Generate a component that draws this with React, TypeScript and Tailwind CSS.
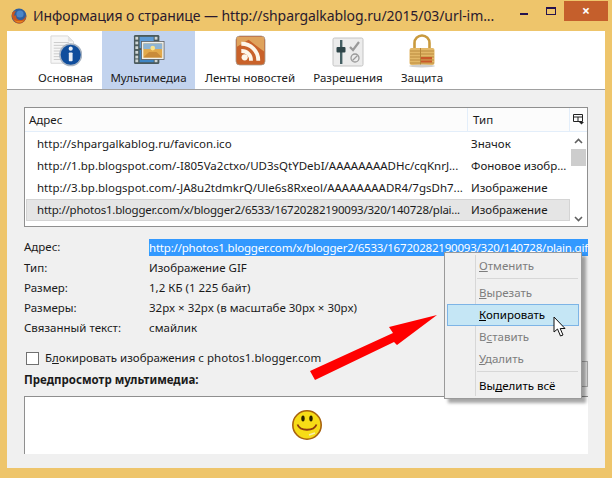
const fontStack = "font-['Noto_Sans','Open_Sans',sans-serif]";

function FirefoxIcon() {
  return (
    <svg width="16" height="16" viewBox="0 0 16 16">
      <circle cx="8" cy="8" r="7.5" fill="#2f5f9e" />
      <circle cx="9" cy="6" r="3.6" fill="#4a86c8" />
      <path d="M1 5 C0 11 4 16 9 15.5 C13 15 15.8 11 15 7 C14.5 10 12 12.5 8.5 12 C5.5 11.5 4.5 9 5.5 7 L3.5 8 C3 7 3.5 4.5 5 3 C3 3 1.8 3.8 1 5 Z" fill="#c9581c" />
      <path d="M3 12 C5 15 10 15.5 13 12.5 C10 13.5 6 13.5 3 12 Z" fill="#e88a1f" />
    </svg>
  );
}

function InfoIcon() {
  return (
    <svg className="mb-px" width="32" height="32" viewBox="0 0 34 34">
      <path d="M1 1 H19 L25 7 V30 H1 Z" fill="#f6f6f6" stroke="#d5d5d5" />
      <path d="M19 1 V7 H25 Z" fill="#e2e2e2" />
      {[8, 11, 14, 17, 20, 23, 26].map((y) => (
        <path key={y} d={`M4 ${y} H20`} stroke="#c9c9c9" strokeWidth="1" />
      ))}
      <circle cx="22" cy="21" r="11.5" fill="#0f4d9c" stroke="#a9b4c2" strokeWidth="1.6" />
      <circle cx="22" cy="14.5" r="2.2" fill="#e9eef5" />
      <rect x="20" y="18.5" width="4" height="9.5" rx="0.8" fill="#e9eef5" />
    </svg>
  );
}

function MediaIcon() {
  return (
    <svg className="mb-[2px]" width="32" height="32" viewBox="0 0 34 34">
      <rect x="1" y="1" width="27" height="31" rx="1.5" fill="#4a5a5c" />
      {[3, 8, 13, 18, 23, 27].map((y) => (
        <g key={y}>
          <rect x="2.5" y={y} width="3" height="3" fill="#cfd6d6" />
          <rect x="23" y={y} width="3" height="3" fill="#cfd6d6" />
        </g>
      ))}
      <rect x="7" y="3" width="15" height="12" fill="#5c9ad6" />
      <rect x="7" y="17" width="15" height="13" fill="#3f86c4" />
      <rect x="9" y="8" width="24" height="19" fill="#f0f0ec" stroke="#5a5a5a" strokeWidth="0.8" />
      <rect x="11" y="10" width="20" height="15" fill="#e2a94b" />
      <rect x="11" y="10" width="20" height="6" fill="#8eb4d4" />
      <circle cx="21" cy="15" r="2.5" fill="#fbe48c" />
      <path d="M11 25 L17 19 H25 L31 25 Z" fill="#c98b3a" />
    </svg>
  );
}

function RssIcon() {
  return (
    <svg className="mb-[2px]" width="31" height="31" viewBox="0 0 32 32">
      <rect x="1" y="1" width="30" height="30" rx="4" fill="#c9622a" stroke="#a8a39a" strokeWidth="0.8" />
      <path d="M2 2 H30 V17 L14 5 L2 12 Z" fill="#dfa35c" />
      <circle cx="10" cy="23" r="3.2" fill="#fdf6ea" />
      <path d="M6.5 14.5 A11.5 11.5 0 0 1 18.5 26.5 H14.5 A7.5 7.5 0 0 0 6.5 18.5 Z" fill="#fdf6ea" />
      <path d="M6.5 7 A19 19 0 0 1 26 26.5 H22 A15 15 0 0 0 6.5 11 Z" fill="#fdf6ea" />
    </svg>
  );
}

function PermissionsIcon() {
  return (
    <svg className="mb-px" width="32" height="30" viewBox="0 0 32 30">
      <rect x="1" y="1" width="30" height="28" rx="1.5" fill="#ececec" stroke="#c4c4c4" />
      <rect x="8" y="3" width="2.4" height="24" fill="#456064" />
      <rect x="4.5" y="10" width="9" height="5.5" rx="1" fill="#2e4549" />
      <path d="M18 10 L21 13 L27 5" fill="none" stroke="#9a9a9a" strokeWidth="2.2" />
      <circle cx="23" cy="21" r="4" fill="none" stroke="#9a9a9a" strokeWidth="1.3" />
      <path d="M20.5 23.5 L25.5 18.5" stroke="#9a9a9a" strokeWidth="1.3" />
    </svg>
  );
}

function LockIcon() {
  return (
    <svg width="28" height="34" viewBox="0 0 28 34">
      <path d="M6.5 15 V9 A7.5 7.5 0 0 1 21.5 9 V15" fill="none" stroke="#c99a3e" strokeWidth="2.6" />
      <rect x="1.5" y="14" width="25" height="17" rx="2" fill="#e3b868" />
      {[17, 20, 23, 26, 29].map((y) => (
        <path key={y} d={`M2 ${y} H26`} stroke="#b5863a" strokeWidth="0.9" />
      ))}
      <rect x="12" y="14" width="1" height="17" fill="#b5863a" />
      <rect x="13" y="23" width="11" height="2.4" fill="#c9582a" />
      <rect x="13" y="26.5" width="11" height="2" fill="#c9582a" />
      <ellipse cx="14" cy="32" rx="13" ry="1.4" fill="#cfcfcf" />
    </svg>
  );
}

function Smiley() {
  return (
    <svg width="30" height="30" viewBox="0 0 30 30">
      <circle cx="15" cy="15" r="14.2" fill="#f7dc16" stroke="#a8620f" strokeWidth="1.6" />
      <ellipse cx="11" cy="8.5" rx="1.7" ry="3" fill="#2b2100" />
      <ellipse cx="19" cy="8.5" rx="1.7" ry="3" fill="#2b2100" />
      <path d="M5.5 14.5 C8 21.5 22 21.5 24.5 14.5" fill="none" stroke="#8f3a10" strokeWidth="1.8" />
      <path d="M17 25 L23 23" stroke="#f6efb0" strokeWidth="1.4" />
    </svg>
  );
}

function RedArrow() {
  return (
    <svg className="absolute left-[305px] top-[310px]" width="136" height="74" viewBox="305 310 136 74">
      <polygon points="310,371 393,333 389,327 437,315 397,345 394,342 315,380" fill="#ff0000" />
    </svg>
  );
}

function Cursor() {
  return (
    <svg className="absolute left-[553px] top-[316px]" width="14" height="22" viewBox="0 0 14 22">
      <path d="M1 1 V16 L4.5 13 L7.5 20 L10 19 L7.2 12.5 H12 Z" fill="#fff" stroke="#111" strokeWidth="1" strokeLinejoin="round" />
    </svg>
  );
}

const tabs = [
  { label: "Основная", width: "w-[73px]", icon: <InfoIcon /> },
  { label: "Мультимедиа", width: "w-[93px]", icon: <MediaIcon />, active: true },
  { label: "Ленты новостей", width: "w-[110px]", icon: <RssIcon /> },
  { label: "Разрешения", width: "w-[86px]", icon: <PermissionsIcon /> },
  { label: "Защита", width: "w-[62px]", icon: <LockIcon /> },
];

const rows = [
  { url: "http://shpargalkablog.ru/favicon.ico", type: "Значок" },
  { url: "http://1.bp.blogspot.com/-I805Va2ctxo/UD3sQtYDebI/AAAAAAAADHc/cqKnrJ...", type: "Фоновое изобр..." },
  { url: "http://3.bp.blogspot.com/-JA8u2tdmkrQ/Ule6s8Rxeol/AAAAAAAADR4/7gsDh7...", type: "Изображение" },
  { url: "http://photos1.blogger.com/x/blogger2/6533/16720282190093/320/140728/plai...", type: "Изображение", selected: true },
];

const details = [
  { label: "Тип:", value: "Изображение GIF" },
  { label: "Размер:", value: "1,2 КБ (1 225 байт)" },
  { label: "Размеры:", value: "32px × 32px (в масштабе 30px × 30px)" },
  { label: "Связанный текст:", value: "смайлик" },
];

function MenuItem({ before = "", mark, after, dim, hot }: { before?: string; mark: string; after: string; dim?: boolean; hot?: boolean }) {
  return (
    <div
      className={`flex h-[22px] items-center border pl-[31px] ${
        hot ? "border-[#7db4e6] bg-[#c5e6f5]" : "border-transparent"
      } ${dim ? "text-[#7d7d7d]" : "text-black"}`}
    >
      <span>
        {before}
        <span className="underline">{mark}</span>
        {after}
      </span>
    </div>
  );
}

function ContextMenu() {
  return (
    <div className="absolute left-[444px] top-[252px] h-[147px] w-[138px] border border-[#9a9a9a] bg-[#f0f0f0] p-[2px] shadow-[4px_4px_3px_rgba(0,0,0,0.35)]">
      <div className="absolute bottom-[2px] left-[30px] top-[2px] w-px bg-[#d7d7d7]" />
      <div className="relative flex flex-col">
        <MenuItem mark="О" after="тменить" dim />
        <div className="mb-[3px] ml-[30px] mr-px mt-px h-px bg-[#d7d7d7]" />
        <MenuItem mark="В" after="ырезать" dim />
        <MenuItem mark="К" after="опировать" hot />
        <MenuItem before="В" mark="с" after="тавить" dim />
        <MenuItem mark="У" after="далить" dim />
        <div className="mb-[3px] ml-[30px] mr-px mt-px h-px bg-[#d7d7d7]" />
        <MenuItem before="Вы" mark="д" after="елить всё" />
      </div>
    </div>
  );
}

export default function App() {
  return (
    <div className={`${fontStack} relative flex h-[478px] w-[612px] flex-col overflow-hidden bg-[#eec56b] text-[11.5px] leading-none text-[#1a1a1a]`}>
      {/* title bar */}
      <div className="flex h-[31px] shrink-0 items-center pl-[11px]">
        <FirefoxIcon />
        <span className="ml-[6px] w-[476px] whitespace-nowrap text-[14px] tracking-[-0.08px] text-[#2a1a2e]">
          Информация о странице — http://shpargalkablog.ru/2015/03/url-im...
        </span>
        <div className="ml-[11px] mt-[13px] h-[2px] w-[8px] self-start bg-[#24124f]" />
        <div className="ml-[18px] mt-[7px] h-[8px] w-[10px] self-start border border-t-2 border-[#24124f]" />
        <div className="ml-[8px] mt-px flex h-[20px] w-[44px] items-center justify-center self-start bg-[#c55f2c] text-[14px] font-bold text-white">
          ×
        </div>
      </div>

      {/* content */}
      <div className="mx-[7px] flex h-[437px] flex-col bg-[#f0f0f0]">
        <div className="flex h-[59px] shrink-0 border-b border-[#a0a0a0] bg-white pl-[22px]">
          {tabs.map((tab) => (
            <div
              key={tab.label}
              className={`flex ${tab.width} flex-col items-center ${tab.active ? "bg-[#c2d3ee]" : ""}`}
            >
              <div className="flex h-[37px] items-end">{tab.icon}</div>
              <span className="mt-[4px] whitespace-nowrap">{tab.label}</span>
            </div>
          ))}
        </div>

        <div className="flex flex-1 flex-col px-[17px] pt-[17px]">
          {/* list */}
          <div className="relative h-[120px] w-[564px] border border-[#8f8f8f] bg-white">
            <div className="flex h-[24px] border-b border-[#e3eefa] bg-[#fcfcfc]">
              <span className="flex w-[443px] items-center border-r border-[#e3eefa] pl-[4px]">Адрес</span>
              <span className="flex w-[102px] items-center border-r border-[#e3eefa] pl-[5px]">Тип</span>
              <span className="flex flex-1 items-center justify-center">
                <svg width="11" height="11" viewBox="0 0 11 11">
                  <path d="M0.5 0.5 H9.5 V7.5 H0.5 Z M0.5 3 H9.5 M5 3 V7.5" fill="none" stroke="#222" />
                  <path d="M6 8 H11 L8.5 10.5 Z" fill="#222" />
                </svg>
              </span>
            </div>
            <div className="flex">
              <div className="flex w-[545px] flex-col pl-px pt-px">
                {rows.map((row) => (
                  <div
                    key={row.url}
                    className={`flex h-[22px] items-center border ${
                      row.selected ? "border-[#d4d4d4] bg-[#e5e5e5]" : "border-transparent"
                    }`}
                  >
                    <span
                      className={`w-[444px] shrink-0 whitespace-nowrap pl-[10px] ${
                        row.selected ? "tracking-[-0.22px]" : ""
                      }`}
                    >
                      {row.url}
                    </span>
                    <span className="whitespace-nowrap">{row.type}</span>
                  </div>
                ))}
              </div>
              <div className="flex h-[94px] w-[17px] flex-col items-center">
                <svg className="mt-[6px]" width="9" height="6" viewBox="0 0 9 6">
                  <path d="M1 5 L4.5 1.5 L8 5" fill="none" stroke="#606060" strokeWidth="1.6" />
                </svg>
                <div className="mt-[5px] h-[17px] w-[15px] bg-[#cdcdcd]" />
                <svg className="mb-[4px] mt-auto" width="9" height="6" viewBox="0 0 9 6">
                  <path d="M1 1 L4.5 4.5 L8 1" fill="none" stroke="#606060" strokeWidth="1.6" />
                </svg>
              </div>
            </div>
          </div>

          {/* details */}
          <div className="mt-[10px] flex h-[20px] items-center">
            <span className="w-[125px] shrink-0 text-[#1a1a1a]">Адрес:</span>
            <span className="h-[17px] w-[440px] whitespace-nowrap bg-[#3399ff] leading-[17px] tracking-[-0.2px] text-white">
              http://photos1.blogger.com/x/blogger2/6533/16720282190093/320/140728/plain.gif
            </span>
          </div>
          <div className="flex flex-col pt-px">
            {details.map((d) => (
              <div key={d.label} className="flex h-[20px] items-center">
                <span className="w-[125px] shrink-0">{d.label}</span>
                <span className="whitespace-nowrap">{d.value}</span>
              </div>
            ))}
          </div>

          <div className="mt-[13px] flex h-[46px] w-[564px] justify-between">
            <div className="flex flex-col">
              <label className="flex h-[14px] items-center pl-[2px]">
                <span className="h-[13px] w-[13px] border border-[#707070] bg-white" />
                <span className="ml-[6px] whitespace-nowrap">
                  Б<span className="underline">л</span>окировать изображения с photos1.blogger.com
                </span>
              </label>
              <span className="mt-[9px] whitespace-nowrap font-bold">Предпросмотр мультимедиа:</span>
            </div>
            <div className="mt-[10px] h-[26px] w-[100px] border border-[#acacac] bg-[#e8e8e8]" />
          </div>

          <div className="mt-[-1px] flex h-[58px] w-[564px] items-start justify-center border-l border-t border-[#8f8f8f] bg-white pt-[13px]">
            <Smiley />
          </div>
        </div>
      </div>

      <RedArrow />
      <ContextMenu />
      <Cursor />
    </div>
  );
}
